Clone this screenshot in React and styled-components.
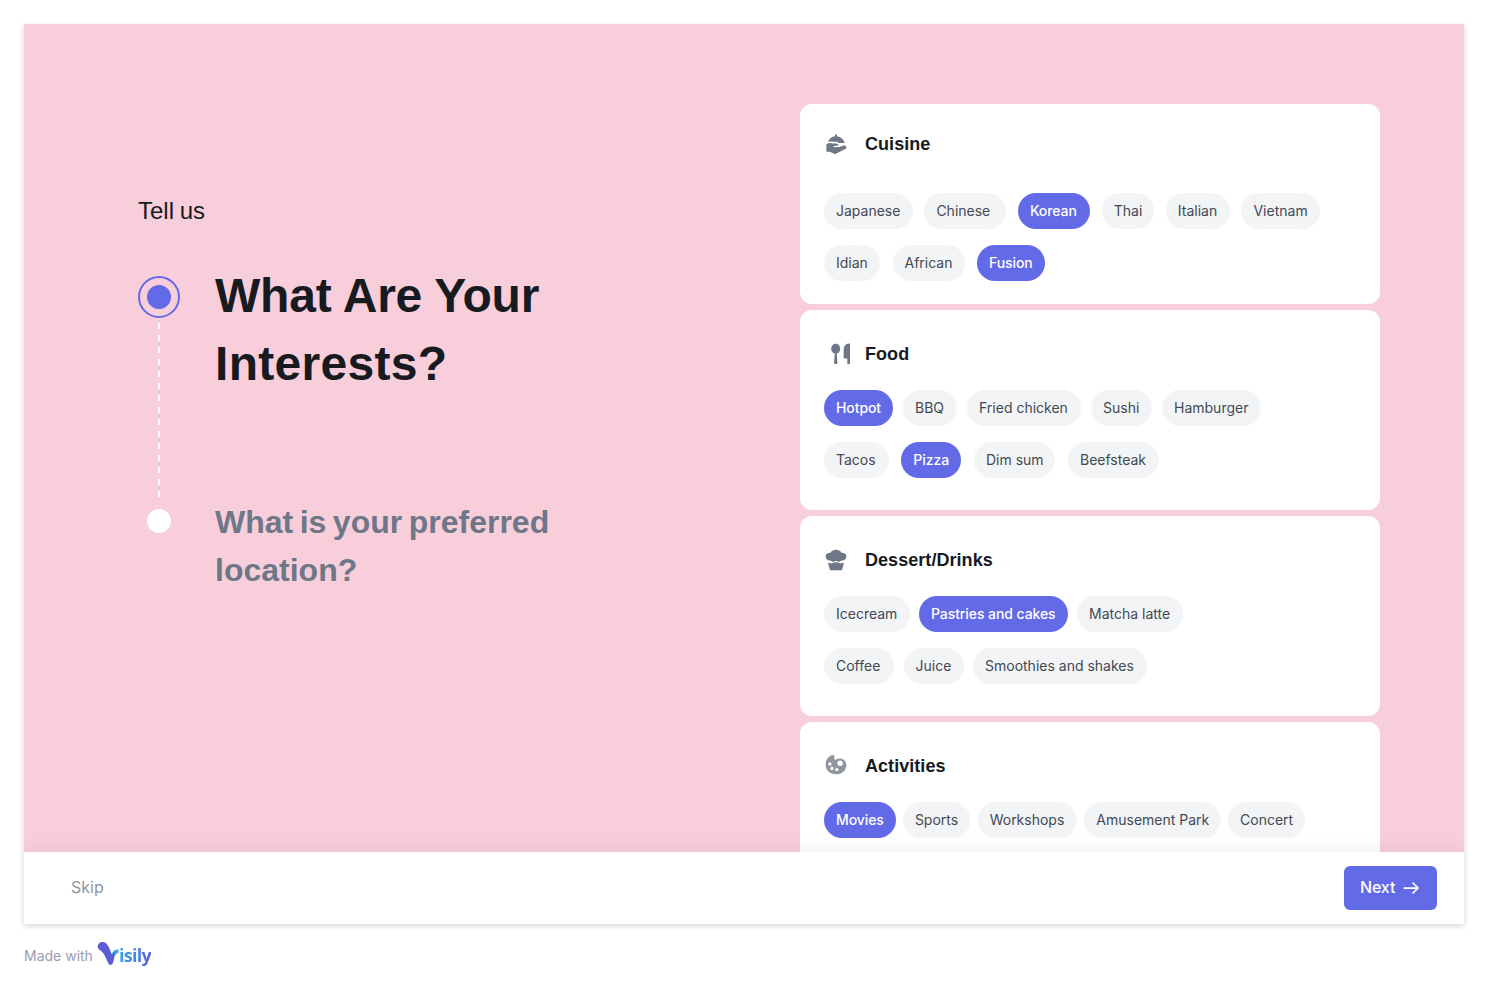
import React from 'react';
import styled, { createGlobalStyle } from 'styled-components';

const Global = createGlobalStyle`
  * { box-sizing: border-box; }
  body { margin: 0; background: #fff; font-family: Inter, sans-serif; overflow: hidden; }
  h1, h2, h3, p { margin: 0; }
`;

const Page = styled.div`
  padding: 24px 24px 0;
  height: 988px;
`;

const Screen = styled.main`
  display: flex;
  flex-direction: column;
  height: 900px;
  background: #f8ceda;
  box-shadow: 0 2px 6px rgba(23, 26, 31, 0.18);
`;

const Content = styled.div`
  display: flex;
  justify-content: space-between;
  height: 828px;
  padding: 80px 84px 0 114px;
  overflow: hidden;
`;

const Intro = styled.section`
  padding-top: 89px;
  font-family: 'Liberation Sans', sans-serif;
`;

const Eyebrow = styled.p`
  font-size: 24px;
  line-height: 36px;
  word-spacing: -1px;
  color: #171a1f;
`;

const Steps = styled.div`
  display: flex;
  gap: 35px;
  margin-top: 32px;
`;

const Track = styled.div`
  display: flex;
  flex-direction: column;
  align-items: center;
  width: 42px;
  padding-top: 15px;
`;

const CurrentDot = styled.div`
  display: grid;
  place-items: center;
  width: 42px;
  height: 42px;
  border: 2px solid #636ae8;
  border-radius: 50%;
`;

const Dot = styled.div`
  width: 24px;
  height: 24px;
  border-radius: 50%;
  background: ${(p) => p.$color};
`;

const Dashes = styled.div`
  width: 2px;
  height: 174px;
  margin: 5px 0 12px;
  background: repeating-linear-gradient(to bottom, #fff 0 6px, transparent 6px 12px);
`;

const Questions = styled.div`
  display: flex;
  flex-direction: column;
  gap: 100px;
  padding-top: 1px;
`;

const Line = styled.span`
  display: block;
  letter-spacing: ${(p) => p.$tracking || 0}px;
  word-spacing: ${(p) => p.$words || 0}px;
`;

const Question = styled.h1`
  font-size: 48px;
  line-height: 68px;
  font-weight: 700;
  color: #171a1f;
`;

const NextQuestion = styled.h2`
  font-size: 32px;
  line-height: 48px;
  font-weight: 700;
  color: #6e7787;
`;

const Cards = styled.section`
  display: flex;
  flex-direction: column;
  gap: 6px;
  width: 580px;
`;

const Card = styled.article`
  flex: none;
  height: 200px;
  padding: ${(p) => (p.$roomy ? '26px' : '30px')} 24px 0;
  border-radius: 12px;
  background: #fff;
`;

const CardHeader = styled.header`
  display: flex;
  align-items: center;
  gap: 17px;
  height: 28px;
  margin-bottom: ${(p) => (p.$roomy ? '35px' : '22px')};
`;

const CardTitle = styled.h3`
  font: 700 18px/28px 'Liberation Sans', sans-serif;
  letter-spacing: 0.05px;
  color: #171a1f;
`;

const CardIcon = styled.svg`
  display: block;
  width: 24px;
  height: 24px;
  color: ${(p) => p.$color || '#6e7787'};
`;

const ChipRow = styled.div`
  display: flex;
  gap: ${(p) => p.$gap}px;
  margin-bottom: 16px;
`;

const Chip = styled.button`
  flex: none;
  width: ${(p) => p.$width}px;
  height: 36px;
  padding: 0 0 0 12px;
  border: 0;
  border-radius: 18px;
  text-align: left;
  white-space: nowrap;
  font: ${(p) => (p.$on ? 500 : 400)} 14px/22px Inter, sans-serif;
  letter-spacing: ${(p) => (p.$on ? '-0.08px' : '0')};
  color: ${(p) => (p.$on ? '#fff' : '#424955')};
  background: ${(p) => (p.$on ? '#636ae8' : '#f3f4f6')};
`;

const Footer = styled.footer`
  position: relative;
  display: flex;
  align-items: center;
  justify-content: space-between;
  height: 72px;
  padding: 0 27px 0 47px;
  background: #fff;
  box-shadow: 0 -4px 18px rgba(23, 26, 31, 0.06);
  clip-path: inset(-24px 0 0 0);
`;

const SkipButton = styled.button`
  padding: 0 0 2px;
  border: 0;
  background: none;
  font: 400 16px/26px Inter, sans-serif;
  color: #9095a0;
`;

const NextButton = styled.button`
  display: flex;
  align-items: center;
  gap: 8px;
  width: 93px;
  height: 44px;
  padding: 0 0 0 16px;
  border: 0;
  border-radius: 6px;
  background: #636ae8;
  font: 500 16px/26px Inter, sans-serif;
  letter-spacing: -0.15px;
  color: #fff;
`;

const NextLabel = styled.span`
  padding-bottom: 2px;
`;

const Credit = styled.div`
  display: flex;
  align-items: flex-start;
  gap: 4px;
  height: 36px;
  margin-top: 17px;
  font: 400 14px/30px Inter, sans-serif;
  color: #9c9bb5;
`;

const CreditText = styled.span`
  width: 69px;
  white-space: nowrap;
`;

const Logo = styled.div`
  display: flex;
`;

const LogoMark = styled.svg`
  display: block;
  width: 22px;
  height: 26px;
`;

const LogoText = styled.span`
  font: 700 18px/28px 'Open Sans', sans-serif;
  letter-spacing: -0.75px;
  color: transparent;
  background: linear-gradient(90deg, #36a3ea, #4b83e6 55%, #5a5bd6);
  background-clip: text;
`;

const icons = {
  cuisine: (
    <>
      <path d="M12 2.200c.6 0 1 .4 1 1v1c4 .5 6.700 3 7.700 6.700h-6c-.8-.8-1.800-1.200-3-1.200H9.500c-1.800-.4-3.700-.4-5.500.2 1.100-3.100 3.600-5.300 7-5.700v-1c0-.6.4-1 1-1z" fill="currentColor" />
      <path d="M2.400 12.200c2-1.300 4.300-1.400 6.400-.6h3.400c1.300 0 2.200.8 2.200 1.900l-4.700.6v1.100l5.400-.2 4.700-1.500c1.300-.4 2.400.2 2.400 1.500v1.500l-9.800 5.100c-.7.400-1.400.4-2.100.1l-4.500-2H2.400z" fill="currentColor" />
    </>
  ),
  food: (
    <>
      <ellipse cx="11.700" cy="6.700" rx="4.500" ry="5" fill="currentColor" />
      <path d="M10.900 10h1.700l.9 10.800c.1 1.600-3.600 1.600-3.500 0z" fill="currentColor" />
      <path d="M26 2.500v19c0 1.100-2.700 1.100-2.700 0v-5h-3.600V8c0-3.700 2-6.300 5-6.500.8 0 1.300.4 1.300 1z" fill="currentColor" />
    </>
  ),
  dessert: (
    <>
      <path d="M6.500 4.700C7.800 2.600 9.700 1.800 12 1.800s4.200.8 5.500 2.900c2.800-.2 4.900 1.500 4.900 3.900 0 2.200-1.700 3.900-4 4-.9 0-1.500.5-2.200.9-1.500.8-2.600-.5-4.200-.5s-2.700 1.300-4.200.5c-.7-.4-1.300-.9-2.200-.9-2.300-.1-4-1.800-4-4 0-2.400 2.100-4.100 4.900-3.900z" fill="currentColor" />
      <path d="M4 14.800c1.700.5 3.300.8 4.800.1 2.200-1 4.200-1 6.400 0 1.500.7 3.100.4 4.800-.1l-2 7.400H6z" fill="currentColor" />
    </>
  ),
  activities: (
    <path fillRule="evenodd" fill="currentColor" d="M9.500 1c.6 0 .9.500.8 1.200-.3 2 .1 3.500 1.200 3.500 1.200 0 2-1.200 4.200-1.200 4 0 6.700 3 6.600 6.700-.1 5.300-4.500 9.200-10.200 9.100C6.100 20.200 1.600 16.400 1.600 10.800 1.600 5.500 4.900 1.300 9.500 1zM16.100 6.600a2.700 2.700 0 1 0 0 5.400 2.700 2.700 0 0 0 0-5.400zM5.900 8.300a1.700 1.700 0 1 0 0 3.400 1.700 1.700 0 0 0 0-3.400zM8 12.700a1.700 1.700 0 1 0 0 3.400 1.700 1.700 0 0 0 0-3.400zM12.900 13.900a1.700 1.700 0 1 0 0 3.400 1.700 1.700 0 0 0 0-3.400z" />
  ),
};

const categories = [
  {
    id: 'cuisine', title: 'Cuisine', roomy: true,
    rows: [
      { gap: 11.6, chips: [['Japanese', 88.800], ['Chinese', 81.900], ['Korean', 72.300, true], ['Thai', 52.500], ['Italian', 64], ['Vietnam', 79]] },
      { gap: 12.5, chips: [['Idian', 56], ['African', 72], ['Fusion', 68, true]] },
    ],
  },
  {
    id: 'food', title: 'Food',
    rows: [
      { gap: 10, chips: [['Hotpot', 69, true], ['BBQ', 54], ['Fried chicken', 114], ['Sushi', 61], ['Hamburger', 99]] },
      { gap: 12.5, chips: [['Tacos', 64.800], ['Pizza', 60.200, true], ['Dim sum', 81.500], ['Beefsteak', 91]] },
    ],
  },
  {
    id: 'dessert', title: 'Dessert/Drinks',
    rows: [
      { gap: 9, chips: [['Icecream', 86], ['Pastries and cakes', 149, true], ['Matcha latte', 106]] },
      { gap: 9.5, chips: [['Coffee', 70], ['Juice', 60], ['Smoothies and shakes', 174]] },
    ],
  },
  {
    id: 'activities', title: 'Activities', iconColor: '#9095a0',
    rows: [
      { gap: 7.2, chips: [['Movies', 71.700, true], ['Sports', 67.600], ['Workshops', 99.500], ['Amusement Park', 136.500], ['Concert', 77]] },
    ],
  },
];

function Category({ id, title, roomy, iconColor, rows }) {
  return (
    <Card $roomy={roomy}>
      <CardHeader $roomy={roomy}>
        <CardIcon viewBox="0 0 24 24" overflow="visible" $color={iconColor}>{icons[id]}</CardIcon>
        <CardTitle>{title}</CardTitle>
      </CardHeader>
      {rows.map((row, i) => (
        <ChipRow key={i} $gap={row.gap}>
          {row.chips.map(([label, width, on]) => (
            <Chip key={label} $width={width} $on={on}>{label}</Chip>
          ))}
        </ChipRow>
      ))}
    </Card>
  );
}

export default function App() {
  return (
    <Page>
      <Global />
      <Screen>
        <Content>
          <Intro>
            <Eyebrow>Tell us</Eyebrow>
            <Steps>
              <Track>
                <CurrentDot><Dot $color="#636ae8" /></CurrentDot>
                <Dashes />
                <Dot $color="#fff" />
              </Track>
              <Questions>
                <Question>
                  <Line $tracking={-0.23}>What Are Your</Line>
                  <Line $tracking={0.3}>Interests?</Line>
                </Question>
                <NextQuestion>
                  <Line $words={-2.4}>What is your preferred</Line>
                  <Line>location?</Line>
                </NextQuestion>
              </Questions>
            </Steps>
          </Intro>
          <Cards>
            {categories.map((c) => <Category key={c.id} {...c} />)}
          </Cards>
        </Content>
        <Footer>
          <SkipButton>Skip</SkipButton>
          <NextButton>
            <NextLabel>Next</NextLabel>
            <svg width="17" height="16" viewBox="0 0 17 16" fill="none" stroke="currentColor" strokeWidth="1.750">
              <path d="M.6 8h14.400M9.500 2.500 15 8l-5.500 5.500" />
            </svg>
          </NextButton>
        </Footer>
      </Screen>
      <Credit>
        <CreditText>Made with</CreditText>
        <Logo>
          <LogoMark viewBox="0 0 22 26">
            <path d="M21.500 8.500c-4.500-.5-6.500 3-8 8l1.300 7.200c2.200-3.200 2-11.200 6.700-12z" fill="#36a3ea" />
            <path d="M.8 5.500C.8 2.800 3 1 5.500 1 10.500 1 12.500 7.500 15 14c1-1.500 1.500-3 2.500-4 0 5-.5 9-2 12.500-.8 2-3.300 1.700-4 0C9 17.500 7.500 12.500 3.500 9.500 1.800 8.300.8 7.400.8 5.500z" fill="#5b5bd6" />
          </LogoMark>
          <LogoText>isily</LogoText>
        </Logo>
      </Credit>
    </Page>
  );
}
